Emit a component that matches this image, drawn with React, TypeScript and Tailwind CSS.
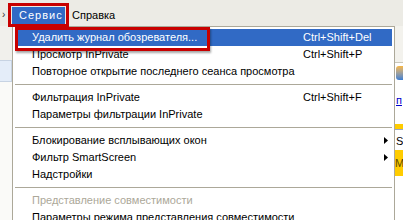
type Item =
  | { kind: 'item'; label: string; shortcut?: string; submenu?: boolean; active?: boolean; disabled?: boolean }
  | { kind: 'sep' };

const items: Item[] = [
  { kind: 'item', label: 'Удалить журнал обозревателя...', shortcut: 'Ctrl+Shift+Del', active: true },
  { kind: 'item', label: 'Просмотр InPrivate', shortcut: 'Ctrl+Shift+P' },
  { kind: 'item', label: 'Повторное открытие последнего сеанса просмотра' },
  { kind: 'sep' },
  { kind: 'item', label: 'Фильтрация InPrivate', shortcut: 'Ctrl+Shift+F' },
  { kind: 'item', label: 'Параметры фильтрации InPrivate' },
  { kind: 'sep' },
  { kind: 'item', label: 'Блокирование всплывающих окон', submenu: true },
  { kind: 'item', label: 'Фильтр SmartScreen', submenu: true },
  { kind: 'item', label: 'Надстройки' },
  { kind: 'sep' },
  { kind: 'item', label: 'Представление совместимости', disabled: true },
  { kind: 'item', label: 'Параметры режима представления совместимости' },
];

function MenuRow({ item }: { item: Item }) {
  if (item.kind === 'sep') {
    return (
      <div className="flex h-[9px] items-center">
        <div className="h-px w-full bg-[#aca899]" />
      </div>
    );
  }
  const color = item.active ? 'bg-[#316ac5] text-white' : item.disabled ? 'text-[#aca899]' : 'text-black';
  return (
    <div className={`flex h-[17px] shrink-0 items-center pl-[17px] pr-[4px] ${color}`}>
      <span className="w-[271px] shrink-0 whitespace-nowrap">{item.label}</span>
      <span className="flex-1 whitespace-nowrap">{item.shortcut}</span>
      {item.submenu && (
        <svg width="4" height="7" viewBox="0 0 4 7" className="shrink-0">
          <path d="M0 0 L4 3.5 L0 7 Z" fill="#000" />
        </svg>
      )}
    </div>
  );
}

export default function App() {
  return (
    <div className="relative flex h-[220px] w-[403px] flex-col overflow-hidden bg-white font-['Liberation_Sans',Arial,sans-serif] text-[11px] leading-none">
      {/* menu bar */}
      <div className="flex h-[26px] shrink-0 bg-[#ecebe5] pt-[7px]">
        <div className="w-[12px] pl-[2px] pt-[3px] text-[10px] text-[#333]">›</div>
        <div className="flex h-[17px] w-[53px] items-center bg-[#316ac5] pl-[7px] tracking-[1px] text-white">Сервис</div>
        <div className="flex h-[17px] items-center px-[7px] text-black">Справка</div>
      </div>

      <div className="flex flex-1">
        {/* page behind, left */}
        <div className="flex w-[12px] shrink-0 flex-col">
          <div className="h-[34px] bg-[#f1f0ec]" />
          <div className="h-[22px] border-y border-r border-[#c7d3e3] bg-[#e4edf9]" />
          <div className="flex-1 bg-[#fafaf8]" />
        </div>

        {/* dropdown */}
        <div className="w-[383px] shrink-0 border border-b-0 border-[#aca899] bg-white p-[2px] pb-0">
          {items.map((it, i) => (
            <MenuRow key={i} item={it} />
          ))}
        </div>

        {/* page behind, right */}
        <div className="flex flex-1 flex-col">
          <div className="h-[37px] border-b border-[#c9c7ba] bg-[#f3f2ed]" />
          <div className="flex h-[20px] items-center pl-[1px]">
            <div className="h-[14px] w-[8px] rounded-l-[3px] bg-gradient-to-b from-[#f7b63c] to-[#3c7dd1]" />
          </div>
          <div className="h-[41px] pt-[12px] pl-[1px] text-[#0000cc] underline">п</div>
          <div className="h-[5px] bg-[#ffcc00]" />
          <div className="h-[1px] bg-[#9aa6c4]" />
          <div className="h-[20px] pt-[6px] pl-[1px] text-black">S</div>
          <div className="flex h-[26px] items-center bg-[#ffcc00] text-[#5a4a00]">M</div>
          <div className="flex-1 bg-white" />
        </div>
      </div>

      {/* annotation frames */}
      <div className="absolute left-[8px] top-[3px] h-[24px] w-[61px] border-[3px] border-[#c80000]" />
      <div className="absolute left-[15px] top-[27px] h-[24px] w-[195px] border-[3px] border-[#c80000] shadow-[1px_2px_2px_rgba(0,0,0,0.35)]" />
    </div>
  );
}
